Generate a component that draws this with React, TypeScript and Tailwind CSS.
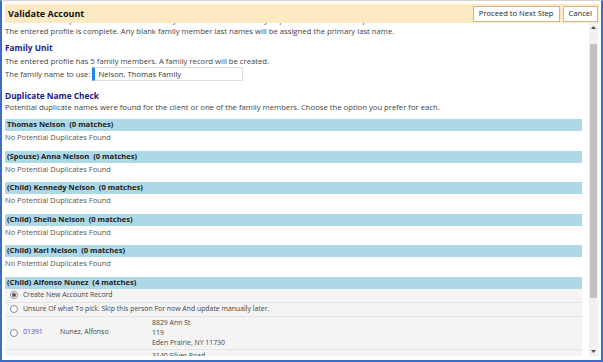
import React from 'react';

const font = { fontFamily: '"Open Sans", "Noto Sans", Arial, sans-serif' };

const members = [
    'Thomas Nelson',
    '(Spouse) Anna Nelson',
    '(Child) Kennedy Nelson',
    '(Child) Sheila Nelson',
    '(Child) Karl Nelson',
];

const Radio = ({ checked = false }: { checked?: boolean }) => (
    <span className="w-[8px] h-[8px] rounded-full border border-[#8a8a8a] bg-white flex items-center justify-center shrink-0">
        {checked && <span className="w-[4px] h-[4px] rounded-full bg-[#555]"></span>}
    </span>
);

const SectionHeader = ({ label }: { label: string }) => (
    <div className="h-[12px] bg-[#add8e6] flex items-center pl-[2px] text-[7.6px] font-bold text-[#222] leading-none whitespace-pre">
        {label}
    </div>
);

const App = () => {
    return (
        <div
            className="w-[603px] h-[362px] bg-white border-2 border-t border-[#3d6cc4] border-t-[#d4d4d4] pt-[3px] pb-[4px] pl-[3px] pr-[2px] flex flex-col overflow-hidden"
            style={font}
        >
            {/* Header */}
            <div className="h-[19px] bg-[#fde9c3] flex items-center justify-between pl-[3px] pr-[1px] shrink-0">
                <span className="text-[9px] font-bold text-[#111] leading-none">Validate Account</span>
                <div className="flex gap-[3px]">
                    <button className="h-[16px] px-[5px] bg-white border border-[#c9b99a] text-[7.6px] text-[#222] leading-none">
                        Proceed to Next Step
                    </button>
                    <button className="h-[16px] px-[5px] bg-white border border-[#c9b99a] text-[7.6px] text-[#222] leading-none">
                        Cancel
                    </button>
                </div>
            </div>

            {/* Body */}
            <div className="flex flex-1 min-h-0">
                <div className="flex-1 overflow-hidden pr-[7px]">
                    <div className="-mt-[8px] text-[7.7px] text-[#444]">
                        <p className="h-[11px] leading-[11px] whitespace-nowrap">
                            Please review the profile information and family members below before you proceed to the next step.
                        </p>
                        <p className="h-[11px] leading-[11px] whitespace-nowrap">
                            The entered profile is complete. Any blank family member last names will be assigned the primary last name.
                        </p>

                        <h2 className="h-[12px] text-[8.3px] font-bold text-[#1a1a8a] leading-[12px] mt-[5px]">Family Unit</h2>
                        <p className="h-[12px] leading-[12px] mt-[1px]">
                            The entered profile has 5 family members. A family record will be created.
                        </p>
                        <div className="h-[14px] flex items-center leading-[12px]">
                            <span>The family name to use:</span>
                            <div className="ml-[2px] w-[151px] h-[14px] border border-[#dcdcdc] border-l-[3px] border-l-[#1e88e5] flex items-center pl-[3px] text-[#333]">
                                Nelson, Thomas Family
                            </div>
                        </div>

                        <h2 className="h-[12px] text-[8.3px] font-bold text-[#1a1a8a] leading-[12px] mt-[9px]">Duplicate Name Check</h2>
                        <p className="h-[11px] leading-[11px]">
                            Potential duplicate names were found for the client or one of the family members. Choose the option you prefer for each.
                        </p>

                        <div className="mt-[6px] flex flex-col gap-[6.5px]">
                            {members.map((m) => (
                                <div key={m}>
                                    <SectionHeader label={`${m}  (0 matches)`} />
                                    <p className="h-[13px] text-[7.5px] text-[#555] leading-[13px]">No Potential Duplicates Found</p>
                                </div>
                            ))}
                            <div>
                                <SectionHeader label="(Child) Alfonso Nunez  (4 matches)" />
                                <div className="bg-[#f4f4f4] text-[6.9px] text-[#444]">
                                    <div className="h-[14px] flex items-center gap-[5px] pl-[5px] border-b border-[#e4e4e4]">
                                        <Radio checked />
                                        <span>Create New Account Record</span>
                                    </div>
                                    <div className="h-[14px] flex items-center gap-[5px] pl-[5px] border-b border-[#e4e4e4]">
                                        <Radio />
                                        <span>Unsure Of what To pick. Skip this person For now And update manually later.</span>
                                    </div>
                                    <div className="h-[33px] flex items-center pl-[5px] border-b border-[#e4e4e4]">
                                        <Radio />
                                        <span className="w-[37px] ml-[5px] text-[#5b3fd6]">01391</span>
                                        <span className="w-[92px]">Nunez, Alfonso</span>
                                        <div className="flex flex-col leading-[10px]">
                                            <span>8829 Ann St</span>
                                            <span>119</span>
                                            <span>Eden Prairie, NY 11730</span>
                                        </div>
                                    </div>
                                    <div className="h-[33px] flex pl-[147px] pt-[1px] leading-[10px]">
                                        <span>3140 Silver Road</span>
                                    </div>
                                </div>
                            </div>
                        </div>
                    </div>
                </div>

                {/* Scrollbar */}
                <div className="w-[9px] bg-[#f1f1f1] flex flex-col items-center shrink-0 mr-[1px]">
                    <div className="h-[9px] flex items-center justify-center">
                        <svg width="5" height="3" viewBox="0 0 5 3"><polygon points="2.5,0 5,3 0,3" fill="#505050" /></svg>
                    </div>
                    <div className="h-[12px]"></div>
                    <div className="w-[7px] h-[254px] bg-[#c1c1c1]"></div>
                    <div className="flex-1"></div>
                    <div className="h-[9px] flex items-center justify-center">
                        <svg width="5" height="3" viewBox="0 0 5 3"><polygon points="0,0 5,0 2.5,3" fill="#505050" /></svg>
                    </div>
                </div>
            </div>
        </div>
    );
};

export default App;
